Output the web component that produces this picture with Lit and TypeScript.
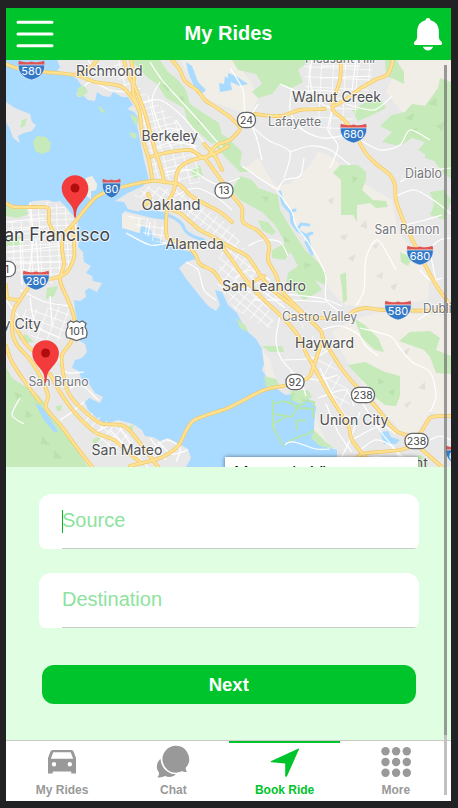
import { LitElement, html, svg, css } from "lit";
import { customElement } from "lit/decorators.js";

type Pt = [number, number];

const pts = (s: string): Pt[] => s.trim().split(/\s+/).map((p) => p.split(",").map(Number) as Pt);

/** Smooth open curve through every point. */
function curve(s: string): string {
  const p = pts(s);
  let d = `M${p[0]}`;
  for (let i = 0; i < p.length - 1; i++) {
    const a = p[Math.max(0, i - 1)], b = p[i], c = p[i + 1], e = p[Math.min(p.length - 1, i + 2)];
    d += `C${b[0] + (c[0] - a[0]) / 7},${b[1] + (c[1] - a[1]) / 7} ${c[0] - (e[0] - b[0]) / 7},${c[1] - (e[1] - b[1]) / 7} ${c}`;
  }
  return d;
}

const LAND = [
  "6,204 11,204 18,208 27,206 33,201 48,200 54,202 60,201 65,206 72,214 78,222 76,232 79,240 78,247 83,252 84,262 91,266 86,273 92,276 93,281 102,283 97,292 89,288 85,291 86,297 80,301 74,300 75,310 77,320 76,330 80,341 85,344 87,352 82,358 75,360 72,368 79,371 81,378 90,385 95,393 103,397 100,403 89,398 85,402 88,410 98,419 106,424 118,420 133,424 142,430 145,436 153,437 160,441 168,438 179,444 188,449 191,458 186,467 6,467",
  "6,102 15,108 30,114 32,122 36,125 32,131 24,133 18,136 20,143 13,138 10,129 6,122",
  "57,60 60,67 57,71 70,75 77,79 82,86 76,94 78,97 84,96 88,100 95,101 97,92 103,96 110,97 113,92 122,97 128,97 133,105 127,109 134,112 139,118 137,125 142,150 144,160 147,172 149,180 143,186 128,193 115,201 124,202 128,209 140,212 158,213 166,216 166,220 152,218 124,211 122,228 130,230 138,233 142,226 150,229 154,237 162,240 163,244 176,245 182,250 194,252 199,258 186,262 179,268 187,280 199,295 208,306 216,311 220,305 215,290 222,292 228,305 237,313 241,321 248,332 256,339 262,349 264,364 262,370 267,378 268,390 276,388 285,395 300,393 310,400 316,408 314,430 326,441 322,446 330,448 337,450 337,467 451,467 451,60",
  "86,178 92,176 97,184 96,190 91,191 91,199 87,196 89,189 85,185",
];

const TERRAIN = [
  "165,60 180,60 192,80 205,100 230,108 250,115 258,98 250,80 232,60",
  "245,168 258,158 275,186 290,184 310,165 318,152 328,155 342,165 358,180 392,200 398,232 405,240 430,268 428,300 370,308 345,305 330,290 322,268 300,232 275,190",
  "352,320 380,312 451,316 451,417 430,412 416,434 400,431 370,395 345,358 332,332",
  "400,60 451,60 451,90 425,122 402,112 386,92",
  "262,349 270,360 276,380 268,388",
  "315,410 320,428 326,440 330,448 322,444 314,430",
];

const GREEN = [
  "131,60 160,60 168,72 178,80 186,90 190,104 205,114 219,123 222,136 212,144 196,130 188,124 184,108 166,98 157,84 148,78",
  "232,60 310,60 298,70 303,82 292,88 280,84 272,94 258,98 252,92 262,84 256,74 238,70",
  "385,60 396,60 404,72 404,84 396,80 386,76",
  "392,115 405,112 412,104 425,106 438,88 440,78 451,82 451,178 444,174 432,158 418,150 425,142 412,138 400,146 382,142 392,132 380,126",
  "352,110 366,102 382,100 386,108 370,116 358,121",
  "210,127 228,138 242,152 240,165 250,172 240,172 228,160 217,148",
  "240,176 252,180 258,188 278,195 280,210 292,230 305,250 318,262 326,273 325,285 315,280 322,290 304,300 294,290 286,284 288,273 298,266 288,247 275,225 262,212 240,200 232,190",
  "333,173 340,165 358,165 366,172 366,180 362,190 373,200 386,201 388,207 376,208 370,203 357,205 357,222 353,215 341,215 341,180",
  "425,150 451,150 451,178 444,174 438,162 425,158",
  "430,192 444,190 451,200 445,220 430,215 434,205",
  "258,220 268,222 276,232 272,235 262,230",
  "272,250 286,243 290,252 285,260 272,258",
  "340,275 346,272 347,300 343,303 342,288",
  "400,252 412,258 408,266 401,262",
  "348,365 365,362 385,372 400,376 400,396 396,406 385,405 375,397 368,386 358,376",
  "399,341 410,332 430,331 440,338 436,350 451,356 451,374 436,373 430,357 424,350",
  "354,318 366,326 378,338 384,352 375,350 362,338",
  "6,367 12,378 28,388 38,395 50,410 65,432 80,455 88,467 6,467",
  "6,206 26,208 28,214 18,218 6,216",
  "6,237 23,236 22,245 6,246",
  "47,288 58,286 54,296 46,299",
  "18,338 26,334 34,342 27,343",
  "33,142 37,136 46,137 51,143 50,151 42,154 35,151",
  "98,106 102,108 106,113 101,112",
  "22,120 27,118 25,126 20,128",
  "78,88 84,85 88,92 82,97 77,96",
  "130,114 139,118 136,126 132,119",
  "129,132 137,134 136,139 131,137",
  "190,170 200,165 203,176 194,178",
  "262,346 282,346 284,352 270,352",
  "264,376 276,379 280,386 272,390 266,386",
  "290,391 308,390 312,397 300,404 292,400",
  "272,402 277,404 275,428 272,429",
  "314,430 326,442 334,448 320,446 311,438",
  "412,458 420,455 428,460 428,467 414,467",
  "92,440 101,436 98,442 94,445",
  "56,406 62,405 61,411 57,411",
  "126,428 134,424 132,432",
  "236,318 246,326 248,332 240,328",
];

const PONDS = [
  "186,62 192,66 198,82 206,90 203,93 194,86 188,72",
  "219,83 224,84 225,76 230,80 232,90 220,92",
  "228,73 236,76 248,84 240,86 228,81",
  "270,392 284,394 300,406 316,406 313,430 306,440 290,440 276,434",
  "380,432 388,431 391,437 400,440 396,444 384,444",
  "35,403 42,407 50,418 58,432 54,432 44,420",
];

const MINOR = [
  "150,62 162,80 180,100 200,122 224,150", "160,82 152,100 160,128 172,148", "88,60 96,70 110,74 128,70",
  "84,86 92,82 110,90 125,92", "140,104 160,100 184,118 205,144", "150,138 170,128 190,136",
  "156,148 172,142 196,146", "165,172 190,170 216,184 240,178", "175,196 195,188 215,196 232,210",
  "176,120 188,138 200,156", "230,68 243,90 245,112 256,136 262,160", "258,104 250,122 268,140 290,152 284,178",
  "280,84 300,92 318,90 340,92", "292,88 290,110 300,128 322,138 345,135", "312,60 310,78 316,100 332,108",
  "322,66 360,66", "320,78 372,76", "356,60 352,90", "346,104 374,110 392,96", "332,112 328,130 338,146 330,168",
  "360,140 380,150 400,145 410,130 430,140", "290,152 310,146 330,150 350,165", "242,166 262,180 278,190",
  "278,190 284,180 300,176 304,158", "396,196 415,190 436,202 451,214", "405,225 425,220 442,215",
  "400,182 420,172 451,168", "396,270 378,240 366,258 364,290 356,306", "420,256 440,240 451,238",
  "278,192 292,212 296,226 308,242 322,266 326,278 326,300 340,312", "248,246 262,240 280,242 288,256",
  "235,278 250,270 270,280", "238,288 260,290 285,308", "252,300 290,300 326,302", "284,294 320,298 342,306",
  "320,330 340,326 358,334 366,346 378,356", "360,328 390,336 400,348 412,362 430,372 436,396 430,412",
  "280,316 276,340 282,360 300,380 306,396", "284,360 314,358 328,350", "290,372 316,380 338,375", "320,368 334,398 348,420",
  "318,398 345,390 354,406", "326,404 338,432 352,452", "360,412 350,440 340,460", "352,440 380,426 396,434",
  "356,392 368,412 384,436 405,460", "360,450 375,440 390,445 402,460", "430,440 440,436 451,440",
  "420,270 430,280 442,278", "430,250 436,280 446,300", "418,320 430,312", "30,202 33,240 28,280",
  "6,222 45,218", "6,232 50,226", "6,252 60,246", "6,262 62,262", "20,240 22,285", "36,240 40,284",
  "20,290 45,302 70,306", "30,298 36,325 60,338", "50,296 52,325", "6,300 20,318 36,330", "56,352 66,372 84,372",
  "70,388 82,385 98,400", "60,420 72,412 84,402", "110,430 130,450 148,467", "120,428 132,446", "96,432 112,424",
  "20,398 12,415 24,424", "150,452 166,440 180,448 176,462", "158,442 172,454 188,450", "150,438 166,460",
  "186,262 198,270 204,290 216,300", "126,233 150,245 168,243", "150,222 148,236",
];

const ROADS = [
  "6,64 20,69 45,72 75,75 95,82 120,86 130,95 139,110 141,125 143,140 149,160 152,178",
  "124,60 128,75 135,87 142,105 147,120 151,135 155,150 160,165 164,181",
  "131,60 134,78 133,92 139,110", "97,60 90,68 75,75",
  "75,222 95,198 112,190 135,184 152,181 165,182 180,185 190,195 205,204 220,212 232,222",
  "172,60 180,70 185,81 198,91 205,100 217,108 230,117",
  "228,115 236,123 240,127", "151,157 165,153 190,150 205,158 217,145 230,140 240,130",
  "255,114 280,116 300,110 325,109",
  "341,60 340,80 334,98 333,110 345,121 357,138 365,152 375,163 390,175 395,185 396,200 405,225 415,245 425,265 438,288 451,306",
  "334,106 345,100 358,90 375,80 388,74 393,60",
  "205,158 216,173 232,195 242,208 243,222 258,231 269,245 268,260 276,275 282,291 296,306 310,320",
  "228,146 212,155 190,161 178,170 174,190 167,207 180,213 200,230 216,239 232,260 246,280 262,298 280,315 297,334 307,355 314,367 330,396 348,425 352,440 366,458",
  "167,207 166,230 169,239 185,244 195,254 200,264 213,271 222,283",
  "216,239 232,248 248,257 262,278 276,293 298,310 320,330 324,340 342,369 356,386 377,408 390,425 400,433 418,435 430,418 442,416 451,416",
  "290,316 340,318 354,311 366,308 385,310 451,311", "228,288 245,285 264,276",
  "130,466 160,458 178,446 193,421 228,408 264,390 288,385 308,378 313,368 323,338",
  "75,222 64,235 62,248 64,265 60,280 67,298 72,310 75,325 71,342 62,355 63,372 68,392 80,407 100,423 124,426 140,443 158,467",
  "73,228 74,245 74,258 67,272 56,278 48,279",
  "28,288 20,300 14,310 12,330 17,345 28,357 38,372 48,395 46,408 62,427 75,445 92,467",
  "6,346 12,362 25,382 40,402", "50,374 60,392 75,413 95,432 114,440 128,452 140,462",
  "6,203 14,207 35,207 48,208 49,222 55,236", "20,300 8,298 6,285",
  "16,328 26,344 32,350", "352,467 360,455 378,452 400,450 418,444", "420,448 434,460 442,467",
  "204,144 215,156 222,170", "144,206 150,200 148,194",
];

/* Street grids: area, angle, cell width, cell height */
const GRIDS: [string, number, number, number][] = [
  ["28,206 48,202 64,206 76,222 76,260 56,284 26,284 8,262 8,222 28,222", -3, 9, 6],
  ["112,60 124,60 142,90 170,115 198,146 200,186 152,176 146,140 138,100 120,84", -14, 10, 7],
  ["132,196 150,186 180,190 230,226 262,276 290,312 270,300 236,262 200,226 168,204", 38, 8, 7],
  ["220,250 240,268 268,306 276,330 260,325 234,308 218,285", 40, 9, 7],
  ["304,64 374,64 366,96 340,140 320,130 306,98", 3, 12, 10],
  ["300,322 322,345 350,392 350,420 320,385", 28, 14, 12],
  ["22,310 68,306 72,334 44,346 24,330", 20, 10, 8],
  ["90,412 124,430 150,462 110,450 80,420", 40, 8, 9],
  ["126,214 160,222 180,248 150,240", 8, 8, 7],
];

/* text, x, baseline, width, size, tone, anchor */
const PLACES: [string, number, number, number, number, string, string][] = [
  ["Richmond", 76, 76, 66.5, 14.5, "town", "start"],
  ["Pleasant Hill", 305, 62.5, 70, 13, "minor", "start"],
  ["Walnut Creek", 292, 102, 89, 14.5, "town", "start"],
  ["Lafayette", 268, 126, 53, 12.5, "minor", "start"],
  ["Berkeley", 141.5, 141, 56.5, 14.5, "town", "start"],
  ["Diablo", 405, 178, 37, 13, "minor", "start"],
  ["Oakland", 141.5, 210, 59, 15, "town", "start"],
  ["San Francisco", 110, 241, 117, 18, "city", "end"],
  ["Alameda", 165.5, 249, 58.5, 14.5, "town", "start"],
  ["San Ramon", 374.5, 234, 65, 13, "minor", "start"],
  ["San Leandro", 222, 291, 84, 14.5, "town", "start"],
  ["Castro Valley", 282, 321, 75, 12.5, "minor", "start"],
  ["Dublin", 423, 313, 35.5, 13, "minor", "start"],
  ["Daly City", 41, 328.5, 60, 14.5, "town", "end"],
  ["Hayward", 295, 347.5, 59, 14.5, "town", "start"],
  ["San Bruno", 28.5, 386, 60, 12.5, "minor", "start"],
  ["Union City", 319.5, 424.5, 69, 14.5, "town", "start"],
  ["San Mateo", 91.5, 455, 71, 14.5, "town", "start"],
  ["Fremont", 428, 468, 56, 14, "town", "end"],
];

const INTERSTATES: [string, number, number][] = [
  ["580", 31.5, 70], ["680", 353.5, 133], ["80", 111.5, 188], ["280", 36, 280],
  ["680", 420, 255], ["580", 398, 310], ["680", 459, 455],
];

const ROUTES: [string, number, number, number][] = [
  ["24", 246.5, 120, 18], ["13", 224, 190.5, 18], ["1", 7, 269, 17], ["92", 295, 382, 18],
  ["238", 363, 395, 23], ["238", 416.5, 441, 23],
];

const PINS: Pt[] = [[75, 218], [45.6, 383]];

@customElement("bay-map")
class BayMap extends LitElement {
  static styles = css`
    :host { display: block; height: 407px; overflow: hidden; position: relative; }
    svg { display: block; width: 445px; height: 407px; }
    .land { fill: #e8e8e8; }
    .terrain { fill: #f1eee7; }
    .green { fill: #c6eab9; }
    .pond { fill: #a9daff; }
    .shade { fill: #afd9a4; opacity: .5; }
    .creek { fill: none; stroke: #a9daff; stroke-width: 3; stroke-linecap: round; stroke-linejoin: round; }
    .levee { fill: none; stroke: #b4e6ab; stroke-width: 1.8; stroke-linejoin: round; }
    .minor-road { fill: none; stroke: #fff; stroke-width: 1.2; }
    .grid-line { fill: none; stroke: #fff; stroke-width: .8; }
    .casing { fill: none; stroke: #f3cb6c; stroke-width: 3.8; stroke-linecap: round; }
    .road { fill: none; stroke: #ffe292; stroke-width: 2.2; stroke-linecap: round; }
    text { font-family: Inter, Roboto, "Liberation Sans", sans-serif; }
    .label { paint-order: stroke; stroke: rgba(255, 255, 255, .75); stroke-width: 2; stroke-linejoin: round; }
    .town { fill: #505154; }
    .city { fill: #434447; }
    .minor { fill: #75777b; }
    .shield-text { fill: #fff; font-size: 11px; text-anchor: middle; }
    .route-text { fill: #444; font-size: 10.5px; text-anchor: middle; }
    .route { fill: #fff; stroke: #66686b; stroke-width: 1.3; }
    .callout {
      position: absolute; left: 219px; top: 397px; width: 193px; height: 40px; padding: 5px 9px;
      box-sizing: border-box; background: #fff; box-shadow: 0 0 4px rgba(0, 0, 0, .5);
      font: 17.5px/22px "Liberation Sans", Arial, sans-serif; color: #111;
    }
  `;

  render() {
    return html`
      <svg viewBox="6 60 445 407">
        <defs>
          ${GRIDS.map(([, a, w, h], i) => svg`
            <pattern id="g${i}" width=${w} height=${h} patternUnits="userSpaceOnUse" patternTransform="rotate(${a})">
              <path class="grid-line" d="M0,.4H${w}M.4,0V${h}"></path>
            </pattern>`)}
        </defs>
        <rect x="6" y="60" width="445" height="407" fill="#a9daff"></rect>
        ${LAND.map((p) => svg`<polygon class="land" points=${p}></polygon>`)}
        <polygon class="terrain" points="122,213 141,218 140,233 130,230 122,228"></polygon>
        <polygon class="terrain" points="86,178 92,176 97,184 96,190 91,191 91,199 87,196 89,189 85,185"></polygon>
        ${TERRAIN.map((p) => svg`<polygon class="terrain" points=${p}></polygon>`)}
        ${GREEN.map((p) => svg`<polygon class="green" points=${p}></polygon>`)}
        <path class="shade" d="M162,84l8,3-2,5zM176,98l7,-2 2,7zM196,118l6,2-4,5zM405,118l9,-5-2,8zM428,104l8,-6 1,8zM436,126l9,-4-3,9zM410,130l8,-2-4,6zM262,196l7,1-3,5zM284,236l6,5-6,2zM304,262l7,3-6,4zM352,176l6,2-5,5zM378,378l7,4-7,3zM388,392l6,-3v7zM14,392l8,3-5,5zM26,410l7,6-8,2zM42,436l8,9-9,-1zM54,450l8,8-8,1z"></path>
        <path fill="#e4e0d8" d="M328,200l6,-3-2,8zM340,236l8,-2-4,7zM360,226l6,-6 1,9zM348,258l8,-4-3,8zM376,276l7,-4-1,7zM390,286l8,-3-4,8zM402,352l8,-4-3,7zM418,388l7,-6v8zM404,404l8,-3-5,7zM372,246l7,-3-3,6z"></path>
        ${PONDS.map((p) => svg`<polygon class="pond" points=${p}></polygon>`)}
        <path class="creek" d="M280,192l3,12 8,9 1,10 5,7 10,6 3,11M297,230l4,-6 8,1M304,236l8,-3M306,242l6,12M292,211l3,-1"></path>
        <path class="creek" d="M140,212Q158,211 170,216T184,228T204,240"></path>
        <path class="levee" d="M273,400V428L284,446M273,404L284,401 296,406 306,404M275,414L292,417 297,408 314,409M294,393L290,402 297,408M302,400L314,402 313,418M275,423L286,417M297,430L296,421 306,420M298,437L308,434 313,430M288,442L298,437"></path>
        <path class="minor-road" d="M285,445Q289,440 298,443T312,448T330,449"></path>
        ${GRIDS.map(([p], i) => svg`<polygon fill="url(#g${i})" points=${p}></polygon>`)}
        ${MINOR.map((p) => svg`<path class="minor-road" d=${curve(p)}></path>`)}
        ${ROADS.map((p) => svg`<path class="casing" d=${curve(p)}></path>`)}
        ${ROADS.map((p) => svg`<path class="road" d=${curve(p)}></path>`)}
        ${PLACES.map(([t, x, y, w, s, tone, anchor]) => svg`
          <text class="label ${tone}" x=${x} y=${y} font-size=${s} text-anchor=${anchor}
            textLength=${w} lengthAdjust="spacingAndGlyphs">${t}</text>`)}
        ${INTERSTATES.map(([t, x, y]) => {
          const w = t.length > 2 ? 13.2 : 9.2;
          return svg`
            <g transform="translate(${x} ${y})">
              <path fill="#3478c8" stroke="#eef3fa" stroke-width=".6"
                d="M${-w},-5H${w}C${w + 0.6},4 ${w * 0.5},8.6 0,10C${-w * 0.5},8.6 ${-w - 0.6},4 ${-w},-5Z"></path>
              <path fill="#e05353" d="M${-w + 0.6},-9.2Q${-w / 2},-6.6 0,-8.6Q${w / 2},-6.6 ${w - 0.6},-9.2L${w},-5.6H${-w}Z"></path>
              <text class="shield-text" y="5.2">${t}</text>
            </g>`;
        })}
        ${ROUTES.map(([t, x, y, w]) => svg`
          <g transform="translate(${x} ${y})">
            <rect class="route" x=${-w / 2} y="-7.7" width=${w} height="15.4" rx="7.2"></rect>
            <text class="route-text" y="3.9">${t}</text>
          </g>`)}
        <path class="route" d="M67.500,323.500l3,-2.500 3,1.300 3,-1.300 3,1.300 3,-1.300 3.500,2.500 -1,3.500q3.500,5 1,10.500l-4,1.200 -5.500,1.800 -5.500,-1.800 -4,-1.200q-2.500,-5.500 1,-10.500z"></path>
        <text class="route-text" x="76.500" y="334.500">101</text>
        ${PINS.map(([x, y]) => svg`
          <g transform="translate(${x} ${y})">
            <path fill="#f33b3c" d="M0,0C-1.200,0 -.8,-6 -2,-9C-4.500,-16 -13.300,-20 -13.300,-29.500A13.300,13.300 0 0 1 13.300,-29.500C13.300,-20 4.500,-16 2,-9C.8,-6 1.200,0 0,0Z"></path>
            <circle cy="-30" r="4.500" fill="#b10d0e"></circle>
          </g>`)}
      </svg>
      <div class="callout">Mountain View</div>
    `;
  }
}

@customElement("app-root")
class AppRoot extends LitElement {
  static styles = css`
    :host {
      display: block; box-sizing: border-box; height: 808px; padding: 8px 7px 7px 6px;
      background: #222224; font-family: "Liberation Sans", Arial, sans-serif;
    }
    .screen { position: relative; display: flex; flex-direction: column; height: 793px; background: #fff; overflow: hidden; }
    .header {
      display: flex; align-items: center; justify-content: space-between; height: 52px; flex: none;
      box-sizing: border-box; padding: 0 8px 0 10px; background: #00c42b; color: #fff;
    }
    .title { font-size: 20px; font-weight: bold; line-height: 24px; margin-bottom: 2px; margin-right: 2px; }
    .menu { width: 38px; height: 30px; }
    .bell { width: 30px; height: 34px; margin-left: 8px; }
    .form { flex: none; height: 273px; box-sizing: border-box; padding: 27px 32px 0 33px; background: #e0fee1; }
    .field {
      display: flex; height: 55px; width: 380px; box-sizing: border-box; padding: 0 3px 0 23px;
      margin-bottom: 24px; background: #fff; border-radius: 12px 12px 5px 5px / 12px 12px 9px 9px; overflow: hidden;
    }
    .input {
      flex: 1; box-sizing: border-box; border-bottom: 1px solid #c9cdca;
      font-size: 20px; line-height: 23px; padding-top: 15px; color: #8de39e;
    }
    .focused { position: relative; }
    .focused::before { content: ""; position: absolute; left: 0; top: 16px; width: 1px; height: 23px; background: #00b92b; }
    .next {
      display: flex; align-items: center; justify-content: center; height: 39px; width: 373.5px;
      margin: 37px 0 0 3px; border-radius: 12px; background: #00c42b; color: #fff;
      font-size: 18.5px; font-weight: bold; padding-top: 1px; box-sizing: border-box;
    }
    .tabs { flex: 1; display: grid; grid-template-columns: repeat(4, 1fr); border-top: 1px solid #c8cbc8; box-sizing: border-box; }
    .tab {
      display: flex; flex-direction: column; align-items: center; justify-content: flex-start; gap: 4px;
      box-sizing: border-box; padding: 2px 0 0 1px; border-top: 2px solid transparent;
      color: #999; font-size: 12px; font-weight: bold; line-height: 14px;
    }
    .tab svg { width: 36px; height: 34px; fill: currentColor; }
    .active { color: #00c42b; border-top-color: #00c42b; }
    .scroll { position: absolute; right: 4px; top: 57px; width: 3px; height: 730px; display: flex; flex-direction: column; }
    .thumb { height: 670px; background: rgba(105, 105, 105, .65); }
    .rail { flex: 1; background: #c1c1c1; }
  `;

  tabs = [
    {
      label: "My Rides",
      icon: svg`<path fill-rule="evenodd" d="M8.500,5H27.500Q29,5 29.500,6.500L32,13V28.600H27.200V26.400H8.800V28.600H4V13L6.500,6.500Q7,5 8.500,5ZM9.300,7.300L6.800,13.700H29.200L26.700,7.300ZM10,17.100A2.200,2.200 0 1 0 10,21.500A2.200,2.200 0 1 0 10,17.100ZM25.800,17.100A2.200,2.200 0 1 0 25.800,21.500A2.200,2.200 0 1 0 25.800,17.100Z"></path>`,
    },
    {
      label: "Chat",
      icon: svg`<path d="M5.500,14C1.600,17 .6,23 3.600,27Q5,29 2.500,32.300Q6.500,33 10,31Q16.500,33.500 21,29.500C12.500,28.500 6.500,23 5.500,14Z"></path>
        <path stroke="#fff" stroke-width="1.400" d="M19.800,.1A14,14 0 1 0 22,28.300Q25,27.800 27,27Q30,28.400 33,27.300Q31.500,25.500 31.300,23.300A14,14 0 0 0 19.800,.1Z"></path>`,
    },
    { label: "Book Ride", icon: svg`<path d="M31.500,3.600Q32.300,3.400 32,4.300L20,31.200Q19.200,32.400 18.200,31.200V18.400L4.300,17.300Q2.800,16.700 4.300,15.900Z"></path>`, active: true },
    {
      label: "More",
      icon: svg`${[6.3, 17, 27.7].map((y) => [7.5, 18.1, 28.8].map((x) => svg`<circle cx=${x} cy=${y} r="4.200"></circle>`))}`,
    },
  ];

  render() {
    return html`
      <div class="screen">
        <div class="header">
          <svg class="menu" viewBox="0 0 38 30"><path d="M2,3.200H36M2,15H36M2,26.800H36" stroke="#fff" stroke-width="3" stroke-linecap="round"></path></svg>
          <div class="title">My Rides</div>
          <svg class="bell" viewBox="0 0 30 34" fill="#fff">
            <path d="M15,.9Q17.300,.9 17.600,3.300Q25.600,5.500 25.900,14V20.500Q26,22.500 28,24.200Q29.500,25.500 29.100,27Q28.800,28 27.500,28H2.500Q1.200,28 .9,27Q.5,25.500 2,24.200Q4,22.500 4.100,20.500V14Q4.400,5.500 12.400,3.300Q12.700,.9 15,.9ZM9.800,29.800H20.200Q18.500,33.500 15,33.500T9.800,29.800Z"></path>
          </svg>
        </div>
        <bay-map></bay-map>
        <div class="form">
          <div class="field"><div class="input focused">Source</div></div>
          <div class="field"><div class="input">Destination</div></div>
          <div class="next">Next</div>
        </div>
        <div class="tabs">
          ${this.tabs.map((t) => html`
            <div class="tab ${t.active ? "active" : ""}">
              <svg viewBox="0 0 36 34">${t.icon}</svg>
              <span>${t.label}</span>
            </div>`)}
        </div>
        <div class="scroll"><div class="thumb"></div><div class="rail"></div></div>
      </div>
    `;
  }
}
